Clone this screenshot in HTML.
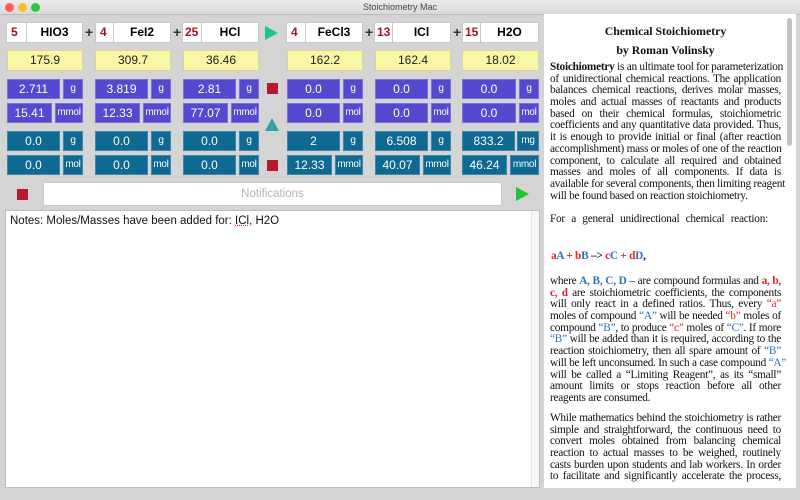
<!DOCTYPE html>
<html><head><meta charset="utf-8"><style>
*{margin:0;padding:0;box-sizing:border-box}
body{width:800px;height:500px;overflow:hidden;background:#d4d4d4;font-family:"Liberation Sans",sans-serif;position:relative}
.a{position:absolute}
.tb{left:0;top:0;width:800px;height:15px;background:linear-gradient(#ececec,#d9d9d9);border-bottom:1px solid #bdbdbd;font-size:9px;color:#444;text-align:center;line-height:15px}
.dot{top:3px;width:9px;height:9px;border-radius:50%}
.hc{background:#fff;border:1px solid #c8c8c8;height:21px;top:22px;line-height:19px;text-align:center;font-size:12px;font-weight:bold;white-space:nowrap}
.cf{color:#a0141e;text-align:left;padding-left:4px}
.plus{top:24px;font-size:14px;font-weight:bold;color:#333}
.y{background:#fbf6a6;border:1px solid #d8d49a;top:50px;height:21px;line-height:19px;text-align:center;font-size:12px;color:#222}
.p,.t{color:#fff;font-size:12px;text-align:center;line-height:18px;height:20px;white-space:nowrap;overflow:hidden}
.p{background:#5549d0;border:1px solid #7a72dc}
.t{background:#0e6a93;border:1px solid #3f88aa}
.u{font-size:10px;letter-spacing:-0.3px}
.rs{width:11px;height:11px;background:#b51a2e}
.txt{font-family:"Liberation Serif",serif;font-size:11.3px;letter-spacing:-0.25px;color:#111;width:231px;left:550px}
.j{text-align:justify;text-align-last:justify;height:11.7px;line-height:11.7px;white-space:nowrap}
.l{line-height:11.7px;white-space:nowrap}
.r{color:#e0242a}.b{color:#2a72c0}
</style></head><body>
<div class="a tb">Stoichiometry Mac</div>
<div class="a dot" style="left:5px;background:#fc5f57"></div>
<div class="a dot" style="left:18px;background:#fdbc2e"></div>
<div class="a dot" style="left:31px;background:#28c840"></div>

<div class="a hc cf" style="left:6px;width:21px">5</div><div class="a hc" style="left:26px;width:57px">HIO3</div>
<div class="a plus" style="left:85px">+</div>
<div class="a hc cf" style="left:95px;width:19px">4</div><div class="a hc" style="left:113px;width:58px">FeI2</div>
<div class="a plus" style="left:173px">+</div>
<div class="a hc cf" style="left:182px;width:20px;padding-left:2px">25</div><div class="a hc" style="left:201px;width:58px">HCl</div>
<svg class="a" style="left:265px;top:26px" width="13" height="14"><polygon points="0,0 13,7 0,14" fill="#1fc38e"/></svg>
<div class="a hc cf" style="left:286px;width:20px">4</div><div class="a hc" style="left:305px;width:58px">FeCl3</div>
<div class="a plus" style="left:365px">+</div>
<div class="a hc cf" style="left:374px;width:19px;padding-left:2px">13</div><div class="a hc" style="left:392px;width:59px">ICl</div>
<div class="a plus" style="left:453px">+</div>
<div class="a hc cf" style="left:462px;width:19px;padding-left:2px">15</div><div class="a hc" style="left:480px;width:59px">H2O</div>

<div class="a y" style="left:7px;width:76px">175.9</div>
<div class="a y" style="left:95px;width:76px">309.7</div>
<div class="a y" style="left:183px;width:76px">36.46</div>
<div class="a y" style="left:287px;width:76px">162.2</div>
<div class="a y" style="left:375px;width:76px">162.4</div>
<div class="a y" style="left:462px;width:77px">18.02</div>

<div class="a p" style="left:7px;top:79px;width:53px">2.711</div><div class="a p u" style="left:63px;top:79px;width:20px">g</div>
<div class="a p" style="left:95px;top:79px;width:53px">3.819</div><div class="a p u" style="left:151px;top:79px;width:20px">g</div>
<div class="a p" style="left:183px;top:79px;width:53px">2.81</div><div class="a p u" style="left:239px;top:79px;width:20px">g</div>
<div class="a p" style="left:287px;top:79px;width:53px">0.0</div><div class="a p u" style="left:343px;top:79px;width:20px">g</div>
<div class="a p" style="left:375px;top:79px;width:53px">0.0</div><div class="a p u" style="left:431px;top:79px;width:20px">g</div>
<div class="a p" style="left:462px;top:79px;width:54px">0.0</div><div class="a p u" style="left:519px;top:79px;width:20px">g</div>
<div class="a p" style="left:7px;top:103px;width:45px">15.41</div><div class="a p u" style="left:55px;top:103px;width:28px">mmol</div>
<div class="a p" style="left:95px;top:103px;width:45px">12.33</div><div class="a p u" style="left:143px;top:103px;width:28px">mmol</div>
<div class="a p" style="left:183px;top:103px;width:45px">77.07</div><div class="a p u" style="left:231px;top:103px;width:28px">mmol</div>
<div class="a p" style="left:287px;top:103px;width:53px">0.0</div><div class="a p u" style="left:343px;top:103px;width:20px">mol</div>
<div class="a p" style="left:375px;top:103px;width:53px">0.0</div><div class="a p u" style="left:431px;top:103px;width:20px">mol</div>
<div class="a p" style="left:462px;top:103px;width:54px">0.0</div><div class="a p u" style="left:519px;top:103px;width:20px">mol</div>
<div class="a t" style="left:7px;top:131px;width:53px">0.0</div><div class="a t u" style="left:63px;top:131px;width:20px">g</div>
<div class="a t" style="left:95px;top:131px;width:53px">0.0</div><div class="a t u" style="left:151px;top:131px;width:20px">g</div>
<div class="a t" style="left:183px;top:131px;width:53px">0.0</div><div class="a t u" style="left:239px;top:131px;width:20px">g</div>
<div class="a t" style="left:287px;top:131px;width:53px">2</div><div class="a t u" style="left:343px;top:131px;width:20px">g</div>
<div class="a t" style="left:375px;top:131px;width:53px">6.508</div><div class="a t u" style="left:431px;top:131px;width:20px">g</div>
<div class="a t" style="left:462px;top:131px;width:53px">833.2</div><div class="a t u" style="left:517px;top:131px;width:22px">mg</div>
<div class="a t" style="left:7px;top:155px;width:53px">0.0</div><div class="a t u" style="left:63px;top:155px;width:20px">mol</div>
<div class="a t" style="left:95px;top:155px;width:53px">0.0</div><div class="a t u" style="left:151px;top:155px;width:20px">mol</div>
<div class="a t" style="left:183px;top:155px;width:53px">0.0</div><div class="a t u" style="left:239px;top:155px;width:20px">mol</div>
<div class="a t" style="left:287px;top:155px;width:45px">12.33</div><div class="a t u" style="left:335px;top:155px;width:28px">mmol</div>
<div class="a t" style="left:375px;top:155px;width:45px">40.07</div><div class="a t u" style="left:423px;top:155px;width:28px">mmol</div>
<div class="a t" style="left:462px;top:155px;width:45px">46.24</div><div class="a t u" style="left:510px;top:155px;width:29px">mmol</div>

<div class="a rs" style="left:267px;top:83px"></div>
<svg class="a" style="left:265px;top:118px" width="14" height="13"><polygon points="7,0 14,13 0,13" fill="#3a9fa8"/></svg>
<div class="a rs" style="left:267px;top:160px"></div>

<div class="a rs" style="left:17px;top:189px"></div>
<div class="a" style="left:43px;top:182px;width:459px;height:24px;background:#fff;border:1px solid #c9c9c9;font-size:11.5px;color:#b3b3b3;text-align:center;line-height:22px">Notifications</div>
<svg class="a" style="left:516px;top:187px" width="13" height="14"><polygon points="0,0 13,7 0,14" fill="#21c23e"/></svg>

<div class="a" style="left:5px;top:210px;width:535px;height:278px;background:#fff;border:1px solid #bdbdbd"></div>
<div class="a" style="left:531px;top:211px;width:8px;height:276px;background:#f6f6f6;border-left:1px solid #e4e4e4"></div>
<div class="a" style="left:10px;top:215px;font-size:11.5px;color:#111">Notes: Moles/Masses have been added for: <span style="text-decoration:underline dotted #e33">ICl</span>, H2O</div>

<div class="a" style="left:544px;top:14px;width:252px;height:474px;background:#fff;overflow:hidden">
<div class="a" style="left:243px;top:4px;width:5px;height:128px;background:#c2c2c2;border-radius:3px"></div>
</div>

<div class="a txt" style="top:24px;text-align:center;font-weight:bold;font-size:11.8px;letter-spacing:0">Chemical Stoichiometry</div>
<div class="a txt" style="top:43px;text-align:center;font-weight:bold;font-size:11.8px;letter-spacing:0">by Roman Volinsky</div>
<div class="a txt" style="top:62px">
<div class="j"><b>Stoichiometry</b> is an ultimate tool for parameterization</div>
<div class="j">of unidirectional chemical reactions. The application</div>
<div class="j">balances chemical reactions, derives molar masses,</div>
<div class="j">moles and actual masses of reactants and products</div>
<div class="j">based on their chemical formulas, stoichiometric</div>
<div class="j">coefficients and any quantitative data provided. Thus,</div>
<div class="j">it is enough to provide initial or final (after reaction</div>
<div class="j">accomplishment) mass or moles of one of the reaction</div>
<div class="j">component, to calculate all required and obtained</div>
<div class="j">masses and moles of all components. If data is</div>
<div class="j">available for several components, then limiting reagent</div>
<div class="l">will be found based on reaction stoichiometry.</div>
</div>
<div class="a txt" style="top:214px;width:218px"><div class="j">For a general unidirectional chemical reaction:</div></div>
<div class="a txt" style="top:250px;font-weight:bold;left:551px"><span class="r">a</span><span class="b">A</span> <span class="r">+ b</span><span class="b">B</span> –&gt; <span class="r">c</span><span class="b">C</span> <span class="r">+ d</span><span class="b">D</span>,</div>
<div class="a txt" style="top:276px">
<div class="j">where <b class="b">A, B, C, D</b> – are compound formulas and <b class="r">a, b,</b></div>
<div class="j"><b class="r">c, d</b> are stoichiometric coefficients, the components</div>
<div class="j">will only react in a defined ratios. Thus, every <span class="r">“a”</span></div>
<div class="j">moles of compound <span class="b">“A”</span> will be needed <span class="r">“b”</span> moles of</div>
<div class="j">compound <span class="b">“B”</span>, to produce <span class="r">“c”</span> moles of <span class="b">“C”</span>. If more</div>
<div class="j"><span class="b">“B”</span> will be added than it is required, according to the</div>
<div class="j">reaction stoichiometry, then all spare amount of <span class="b">“B”</span></div>
<div class="j">will be left unconsumed. In such a case compound <span class="b">“A”</span></div>
<div class="j">will be called a “Limiting Reagent”, as its “small”</div>
<div class="j">amount limits or stops reaction before all other</div>
<div class="l">reagents are consumed.</div>
</div>
<div class="a txt" style="top:413px">
<div class="j">While mathematics behind the stoichiometry is rather</div>
<div class="j">simple and straightforward, the continuous need to</div>
<div class="j">convert moles obtained from balancing chemical</div>
<div class="j">reaction to actual masses to be weighed, routinely</div>
<div class="j">casts burden upon students and lab workers. In order</div>
<div class="j">to facilitate and significantly accelerate the process,</div>
</div>
</body></html>
